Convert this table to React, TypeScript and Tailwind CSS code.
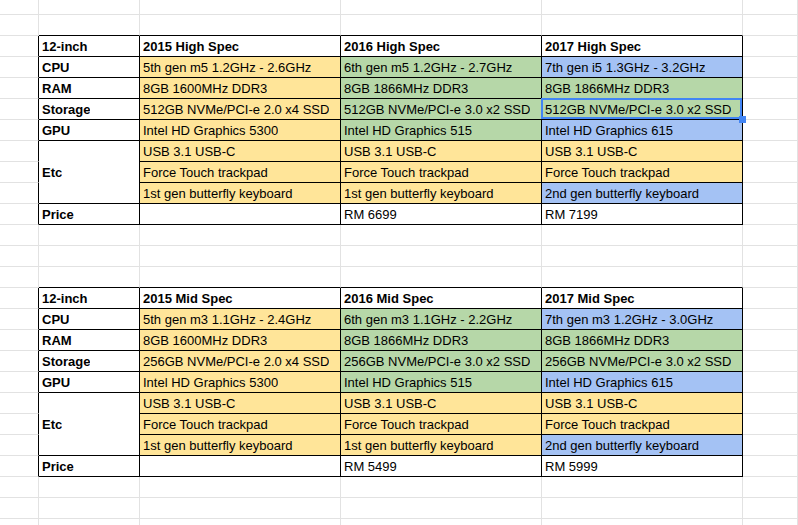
import React from "react";

type Cell = { text: string; bg?: string; bold?: boolean; selected?: boolean };
type SpecRow = { label: string; cells: Cell[] };

const Y = "bg-[#ffe599]";
const G = "bg-[#b6d7a8]";
const B = "bg-[#a4c2f4]";

// border classes for each kind of cell
const PLAIN = "border-r-[#e2e2e2] border-b-[#e2e2e2]";
const LEFT_OF_TABLE = "border-r-black border-b-[#e2e2e2]";
const ABOVE_TABLE = "border-r-[#e2e2e2] border-b-black";
const IN_TABLE = "border-r-black border-b-black";

function buildTable(spec: "High" | "Mid", prices: [string, string]): SpecRow[] {
  const high = spec === "High";
  const size = high ? "512" : "256";
  return [
    {
      label: "12-inch",
      cells: [
        { text: `2015 ${spec} Spec`, bold: true },
        { text: `2016 ${spec} Spec`, bold: true },
        { text: `2017 ${spec} Spec`, bold: true },
      ],
    },
    {
      label: "CPU",
      cells: high
        ? [
            { text: "5th gen m5 1.2GHz - 2.6GHz", bg: Y },
            { text: "6th gen m5 1.2GHz - 2.7GHz", bg: G },
            { text: "7th gen i5 1.3GHz - 3.2GHz", bg: B },
          ]
        : [
            { text: "5th gen m3 1.1GHz - 2.4GHz", bg: Y },
            { text: "6th gen m3 1.1GHz - 2.2GHz", bg: G },
            { text: "7th gen m3 1.2GHz - 3.0GHz", bg: B },
          ],
    },
    {
      label: "RAM",
      cells: [
        { text: "8GB 1600MHz DDR3", bg: Y },
        { text: "8GB 1866MHz DDR3", bg: G },
        { text: "8GB 1866MHz DDR3", bg: G },
      ],
    },
    {
      label: "Storage",
      cells: [
        { text: `${size}GB NVMe/PCI-e 2.0 x4 SSD`, bg: Y },
        { text: `${size}GB NVMe/PCI-e 3.0 x2 SSD`, bg: G },
        { text: `${size}GB NVMe/PCI-e 3.0 x2 SSD`, bg: G, selected: high },
      ],
    },
    {
      label: "GPU",
      cells: [
        { text: "Intel HD Graphics 5300", bg: Y },
        { text: "Intel HD Graphics 515", bg: G },
        { text: "Intel HD Graphics 615", bg: B },
      ],
    },
    {
      label: "Etc",
      cells: [
        { text: "USB 3.1 USB-C", bg: Y },
        { text: "USB 3.1 USB-C", bg: Y },
        { text: "USB 3.1 USB-C", bg: Y },
      ],
    },
    {
      label: "",
      cells: [
        { text: "Force Touch trackpad", bg: Y },
        { text: "Force Touch trackpad", bg: Y },
        { text: "Force Touch trackpad", bg: Y },
      ],
    },
    {
      label: "",
      cells: [
        { text: "1st gen butterfly keyboard", bg: Y },
        { text: "1st gen butterfly keyboard", bg: Y },
        { text: "2nd gen butterfly keyboard", bg: B },
      ],
    },
    {
      label: "Price",
      cells: [{ text: "" }, { text: prices[0] }, { text: prices[1] }],
    },
  ];
}

function SheetCell({
  border,
  text = "",
  bg = "bg-white",
  bold = false,
  selected = false,
  span3 = false,
}: {
  border: string;
  text?: string;
  bg?: string;
  bold?: boolean;
  selected?: boolean;
  span3?: boolean;
}) {
  return (
    <div
      className={`relative flex items-center border-r border-b px-[3px] pt-[2px] ${border} ${bg} ${
        span3 ? "row-span-3" : ""
      } ${selected ? "z-10" : ""}`}
    >
      <span className={`overflow-hidden whitespace-nowrap leading-5 ${bold ? "font-bold" : ""}`}>{text}</span>
      {selected && (
        <>
          <div className="pointer-events-none absolute -top-px -left-px right-0 bottom-0 border-2 border-[#4285f4]" />
          <div className="absolute left-[197px] top-[17px] h-[7px] w-[7px] bg-[#4285f4]" />
        </>
      )}
    </div>
  );
}

function EmptyRow({ aboveTable = false }: { aboveTable?: boolean }) {
  return (
    <>
      <SheetCell border={PLAIN} />
      {[0, 1, 2, 3].map((i) => (
        <SheetCell key={i} border={aboveTable ? ABOVE_TABLE : PLAIN} />
      ))}
      <SheetCell border={PLAIN} />
    </>
  );
}

function SpecTable({ rows }: { rows: SpecRow[] }) {
  return (
    <>
      {rows.map((row, r) => (
        <React.Fragment key={r}>
          <SheetCell border={LEFT_OF_TABLE} />
          {/* Etc label is merged across three rows */}
          {row.label === "Etc" && <SheetCell border={IN_TABLE} text="Etc" bold span3 />}
          {row.label !== "Etc" && row.label !== "" && <SheetCell border={IN_TABLE} text={row.label} bold />}
          {row.cells.map((c, i) => (
            <SheetCell key={i} border={IN_TABLE} text={c.text} bg={c.bg} bold={c.bold} selected={c.selected} />
          ))}
          <SheetCell border={PLAIN} />
        </React.Fragment>
      ))}
    </>
  );
}

export default function App() {
  const high = buildTable("High", ["RM 6699", "RM 7199"]);
  const mid = buildTable("Mid", ["RM 5499", "RM 5999"]);

  return (
    <div className="h-[525px] w-[798px] overflow-hidden bg-white font-['Liberation_Sans',Arial,sans-serif] text-[13px] text-black">
      <div className="grid grid-cols-[39px_101px_201px_201px_201px_1fr] grid-rows-[15px_repeat(25,21px)]">
        <EmptyRow />
        <EmptyRow aboveTable />
        <SpecTable rows={high} />
        <EmptyRow />
        <EmptyRow />
        <EmptyRow aboveTable />
        <SpecTable rows={mid} />
        <EmptyRow />
        <EmptyRow />
        <EmptyRow />
      </div>
    </div>
  );
}
